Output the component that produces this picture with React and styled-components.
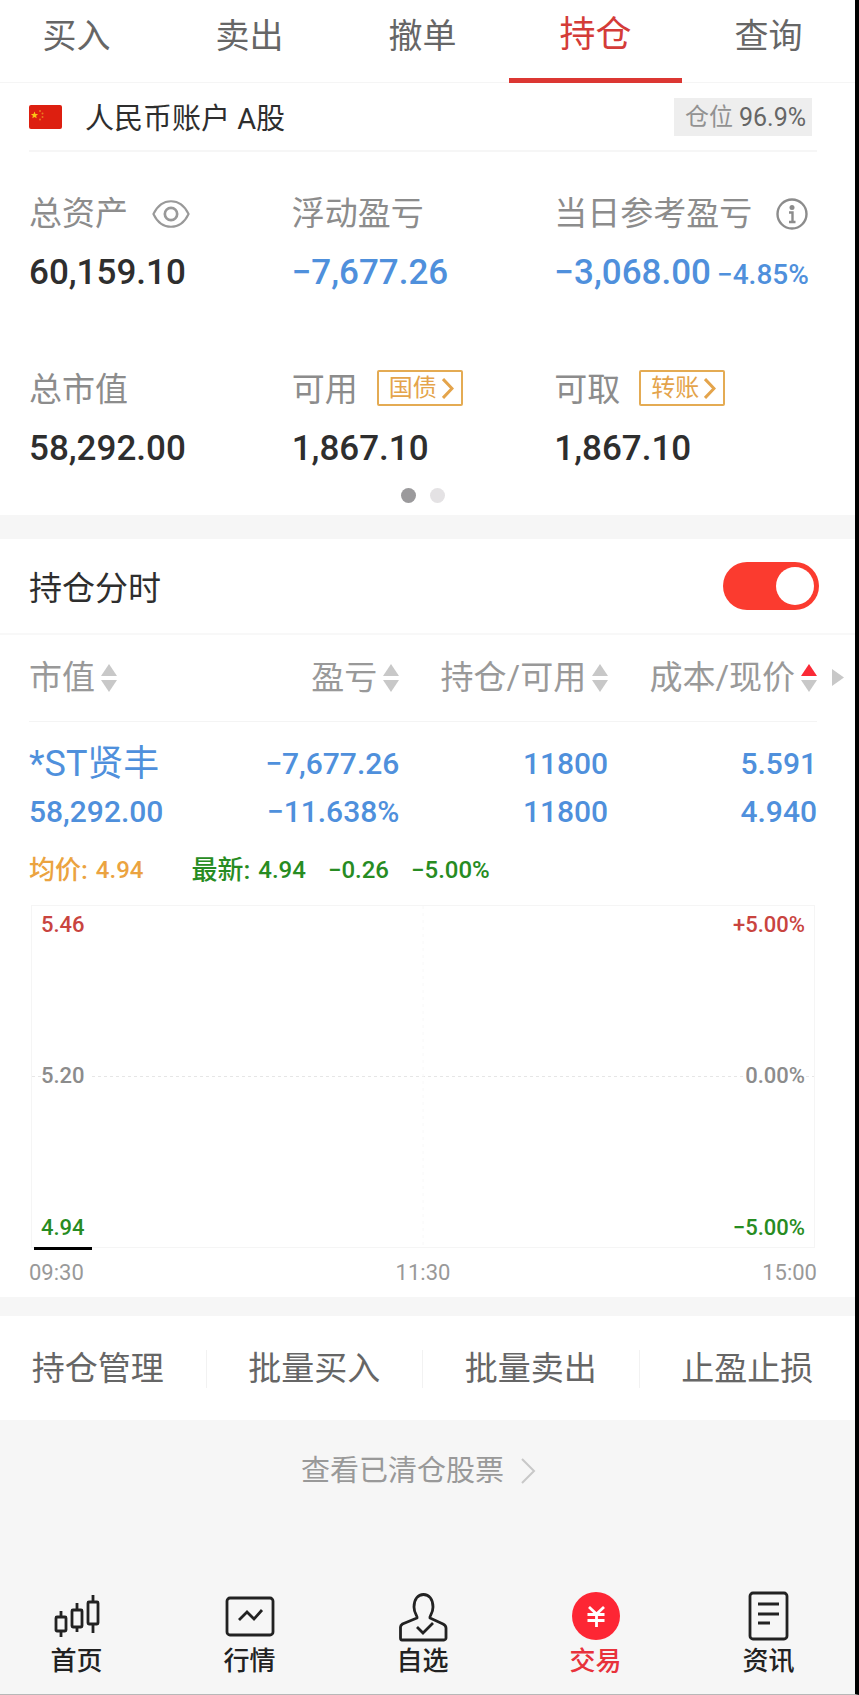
import React, { useState } from 'react'
import styled, { createGlobalStyle } from 'styled-components';

const GlobalStyle = createGlobalStyle`
    * {
        box-sizing: border-box;
    }
    body {
        margin: 0;
        background: #f6f6f6;
        font-family: Roboto, "Noto Sans CJK SC", sans-serif;
        line-height: 1.2;
        color: #2e2e2e;
    }
    button, a {
        font: inherit;
        color: inherit;
        text-decoration: none;
        background: none;
        border: 0;
        padding: 0;
        cursor: pointer;
    }
`;

const Screen = styled.div`
    display: flex;
    flex-direction: column;
    min-height: 100vh;
    overflow: hidden;
    border-right: 4px solid #000;
    border-bottom: 1px solid #b8b8b8;
`;

const Panel = styled.section`
    background: #fff;
    padding: 0 38px 0 29px;
    margin-bottom: ${({ gap }) => gap || 0}px;
`;

// верхние вкладки
const Tabs = styled.nav`
    display: flex;
    height: 83px;
    margin-left: -10px;
    background: #fff;
    border-bottom: 1px solid #f5f5f5;
`;

const Tab = styled.button`
    flex: 1;
    height: 83px;
    padding-bottom: ${({ $active }) => ($active ? 6 : 11)}px;
    border-bottom: ${({ $active }) => ($active ? '5px solid #dc3733' : '0')};
    font-size: ${({ $active }) => ($active ? 36 : 34)}px;
    color: ${({ $active }) => ($active ? '#d43c38' : '#666')};
`;

const AccountRow = styled.div`
    display: flex;
    align-items: center;
    height: 69px;
    border-bottom: 2px solid #f6f6f6;
`;

const AccountName = styled.h1`
    margin: 0 auto 0 23px;
    padding-top: 4px;
    font-size: 29px;
    font-weight: 400;
    line-height: 40px;
`;

const PositionRate = styled.div`
    display: flex;
    align-items: center;
    gap: 6px;
    height: 38px;
    margin-right: 5px;
    padding: 2px 6px 0 11px;
    background: #eee;
    font-size: 25px;
    color: #666;
`;

const RateLabel = styled.span`
    font-size: 24px;
    color: #929292;
`;

const Stats = styled.dl`
    display: grid;
    grid-template-columns: repeat(3, 1fr);
    row-gap: 67px;
    margin: 0;
    padding-top: 38px;
`;

const StatLabel = styled.dt`
    display: flex;
    align-items: center;
    height: 48px;
    margin-bottom: 11px;
    font-size: 33px;
    color: #8c8c8c;
    white-space: nowrap;
`;

const StatValue = styled.dd`
    margin: 0;
    font-size: 35px;
    font-weight: 500;
    line-height: 48px;
    white-space: nowrap;
    color: ${({ $blue }) => ($blue ? '#4f90dc' : '#2e2e2e')};
`;

const Percent = styled.span`
    margin-left: 6px;
    font-size: 28px;
`;

const IconButton = styled.button`
    display: flex;
    margin-left: 24px;
`;

const TagButton = styled.button`
    display: flex;
    align-items: center;
    gap: 5px;
    height: 36px;
    margin: 0 0 4px 19px;
    padding: 0 7px 0 10px;
    border: 2px solid #e4ab53;
    border-radius: 2px;
    font-size: 24px;
    color: #e4a44b;
`;

const Dots = styled.div`
    display: flex;
    justify-content: center;
    gap: 14px;
    padding: 15px 0 12px;
`;

const Dot = styled.span`
    width: 15px;
    height: 15px;
    border-radius: 50%;
    background: ${({ $active }) => ($active ? '#9b9a9c' : '#e4e2e4')};
`;

const SwitchRow = styled.label`
    display: flex;
    justify-content: space-between;
    align-items: center;
    height: 96px;
    margin: 0 -38px 0 -29px;
    padding: 0 36px 0 29px;
    border-bottom: 2px solid #f8f8f8;
    font-size: 33px;
    line-height: normal;
`;

const Switch = styled.input`
    appearance: none;
    width: 96px;
    height: 48px;
    margin: 0;
    padding: 5px;
    border-radius: 24px;
    background: ${({ checked }) => (checked ? '#fb3b2f' : '#ddd')};
    cursor: pointer;

    &::before {
        content: "";
        display: block;
        width: 38px;
        height: 38px;
        margin-left: ${({ checked }) => (checked ? 48 : 0)}px;
        border-radius: 50%;
        background: #fff;
    }
`;

const TableWrap = styled.div`
    position: relative;
`;

const ScrollHint = styled.svg`
    position: absolute;
    top: 34px;
    right: -27px;
`;

const Table = styled.table`
    width: 100%;
    table-layout: fixed;
    border-collapse: collapse;
`;

const HeadCell = styled.th`
    width: ${({ $width }) => ($width ? `${$width}%` : 'auto')};
    height: 86px;
    padding: 0;
    border-bottom: 1px solid #f4f4f4;
    font-size: 33px;
    font-weight: 400;
    color: #999;
    text-align: ${({ $left }) => ($left ? 'left' : 'right')};
    white-space: nowrap;
`;

const SortButton = styled.button`
    display: inline-flex;
    align-items: center;
    gap: 6px;
`;

const Cell = styled.td`
    padding: 18px 0 4px;
    font-size: 30px;
    font-weight: 500;
    line-height: 48px;
    color: #4f90dc;
    text-align: ${({ $left }) => ($left ? 'left' : 'right')};
    white-space: nowrap;
`;

const StockName = styled.div`
    font-size: 36px;
    font-weight: 400;
`;

const Quote = styled.div`
    display: flex;
    align-items: center;
    gap: 22px;
    height: 44px;
    margin: 9px 0 12px;
    font-size: 24px;
    font-weight: 500;
    color: #278c22;
`;

const QuoteItem = styled.span`
    display: flex;
    align-items: center;
    gap: 8px;
    color: ${({ $orange }) => ($orange ? '#eba340' : '#278c22')};
    margin-right: ${({ $orange }) => ($orange ? 26 : 0)}px;
`;

const QuoteLabel = styled.span`
    font-size: 26px;
`;

const Chart = styled.div`
    position: relative;
    display: flex;
    flex-direction: column;
    justify-content: space-between;
    height: 343px;
    margin: 0 2px;
    padding: 7px 9px;
    border: 1px solid #f5f5f5;
`;

const ChartGrid = styled.svg`
    position: absolute;
    inset: 0;
    width: 100%;
    height: 100%;
    overflow: visible;
`;

const ScaleRow = styled.div`
    position: relative;
    display: flex;
    justify-content: space-between;
    font-size: 22px;
    font-weight: 500;
    line-height: 24px;
    color: ${({ color }) => color};
`;

const ScaleText = styled.span`
    padding-right: ${({ $padded }) => ($padded ? 4 : 0)}px;
    background: #fff;
`;

const Times = styled.div`
    display: flex;
    justify-content: space-between;
    padding: 13px 0 12px;
    font-size: 22px;
    line-height: 24px;
    color: #999;
`;

const Actions = styled.div`
    display: flex;
    height: 104px;
    margin-left: -10px;
    padding: 34px 0 32px;
    background: #fff;
`;

const Action = styled.button`
    flex: 1;
    font-size: 33px;
    line-height: 38px;
    color: #666;
    white-space: nowrap;

    & + & {
        border-left: 1px solid #f2f2f2;
    }
`;

const ClearedLink = styled.a`
    display: flex;
    justify-content: center;
    align-items: center;
    gap: 17px;
    margin: 33px 0;
    padding-right: 18px;
    font-size: 29px;
    line-height: 36px;
    color: #999;
`;

const BottomNav = styled.nav`
    display: flex;
    margin: auto 0 0 -10px;
    padding-bottom: 15px;
`;

const NavItem = styled.a`
    flex: 1;
    display: flex;
    flex-direction: column;
    align-items: center;
    gap: 3px;
    font-size: 26px;
    font-weight: 500;
    line-height: 36px;
    color: ${({ $active }) => ($active ? '#e8323b' : '#222')};
`;

const Flag = () => (
    <svg width="33" height="24" viewBox="0 0 33 24">
        <rect width="33" height="24" rx="2" fill="#dd1f10" />
        <path d="M5.500 6.500l1 2.400 2.600.2-2 1.700.6 2.500-2.200-1.400-2.200 1.400.6-2.500-2-1.700 2.600-.2z" fill="#f9c515" />
        <g fill="#ea7a20">
            <circle cx="11" cy="6" r="1" />
            <circle cx="13.500" cy="8.500" r="1" />
            <circle cx="13.500" cy="12" r="1" />
            <circle cx="11" cy="14.500" r="1" />
        </g>
    </svg>
)

const Eye = () => (
    <svg width="38" height="30" viewBox="0 0 40 30" fill="none" stroke="#999" strokeWidth="2.200">
        <path d="M1.500 15C6 5.500 12.500 1.500 20 1.500S34 5.500 38.500 15C34 24.500 27.500 28.500 20 28.500S6 24.500 1.500 15z" />
        <circle cx="20" cy="15" r="6.500" strokeWidth="2.800" />
    </svg>
)

const Info = () => (
    <svg width="32" height="32" viewBox="0 0 32 32" fill="none" stroke="#8c8c8c" strokeWidth="2.400">
        <circle cx="16" cy="16" r="14.500" />
        <circle cx="16" cy="9.500" r="2.500" fill="#8c8c8c" stroke="none" />
        <path d="M13 14.500h3.500V24M13 24h6.500" />
    </svg>
)

const Chevron = ({ width = 12, height = 21, color, stroke = 3 }) => (
    <svg width={width} height={height} viewBox={`0 0 ${width} ${height}`} fill="none" stroke={color} strokeWidth={stroke}>
        <path d={`M1 1L${width - 2} ${height / 2}L1 ${height - 1}`} />
    </svg>
)

const SortArrows = ({ up }) => (
    <svg width="16" height="28" viewBox="0 0 16 28">
        <path d="M8 0l8 12H0z" fill={up ? '#fa2a36' : '#c8c8c8'} />
        <path d="M0 16h16l-8 12z" fill="#c8c8c8" />
    </svg>
)

const navIcons = {
    home: (
        <>
            <path d="M8 19v5M8 39v6M24 11v6M24 35v5M40 3v6M40 32v9" />
            <rect x="3" y="25" width="10" height="14" rx="1" />
            <rect x="19" y="18" width="10" height="17" rx="1" />
            <rect x="35" y="10" width="10" height="22" rx="1" />
        </>
    ),
    market: (
        <>
            <rect x="1" y="6" width="46" height="37" rx="3" />
            <path d="M13 28l8-8 7 7 8-9" />
        </>
    ),
    watch: (
        <>
            <path d="M18 26c1-2-3-4-3-11C15 7 19 2.500 24.500 2.500S34 7 34 15c0 7-4 9-3 11l13 6c2 1 3 2 3 4v10c0 1-1 2-2 2H3c-1 0-1.500-1-1.500-2V35c0-1 .5-2 2-3z" />
            <path d="M18 35l6 6 10-10" />
        </>
    ),
    trade: (
        <>
            <circle cx="24" cy="24" r="24" fill="#fd2634" stroke="none" />
            <path d="M17 15l7.500 7 7.500-7M15.500 22.500h17M15.500 28.500h17M24.500 22v13" stroke="#fff" />
        </>
    ),
    news: (
        <>
            <rect x="5" y="1" width="37" height="46" rx="3" />
            <path d="M13 12h21M13 22h21M13 31h12" />
        </>
    ),
};

const NavIcon = ({ name }) => (
    <svg width="48" height="48" viewBox="0 0 48 48" fill="none" stroke="#222" strokeWidth="2.800" overflow="visible">
        {navIcons[name]}
    </svg>
)

const tabs = ['买入', '卖出', '撤单', '持仓', '查询'];

const columns = [
    { title: '市值', width: 25 },
    { title: '盈亏', width: 22 },
    { title: '持仓/可用' },
    { title: '成本/现价', up: true },
];

const nav = [
    { title: '首页', icon: 'home' },
    { title: '行情', icon: 'market' },
    { title: '自选', icon: 'watch' },
    { title: '交易', icon: 'trade' },
    { title: '资讯', icon: 'news' },
];

export default function App() {
    const [tab, setTab] = useState('持仓')
    const [showChart, setShowChart] = useState(true)

    return (
        <>
            <GlobalStyle />
            <Screen>
                <Tabs>
                    {tabs.map((title) => (
                        <Tab key={title} $active={title === tab} onClick={() => setTab(title)}>{title}</Tab>
                    ))}
                </Tabs>

                <Panel gap={24}>
                    <AccountRow>
                        <Flag />
                        <AccountName>人民币账户 A股</AccountName>
                        <PositionRate><RateLabel>仓位</RateLabel>96.9%</PositionRate>
                    </AccountRow>

                    <Stats>
                        <div>
                            <StatLabel>总资产<IconButton aria-label="隐藏金额"><Eye /></IconButton></StatLabel>
                            <StatValue>60,159.10</StatValue>
                        </div>
                        <div>
                            <StatLabel>浮动盈亏</StatLabel>
                            <StatValue $blue>−7,677.26</StatValue>
                        </div>
                        <div>
                            <StatLabel>当日参考盈亏<IconButton aria-label="说明"><Info /></IconButton></StatLabel>
                            <StatValue $blue>−3,068.00<Percent>−4.85%</Percent></StatValue>
                        </div>
                        <div>
                            <StatLabel>总市值</StatLabel>
                            <StatValue>58,292.00</StatValue>
                        </div>
                        <div>
                            <StatLabel>可用<TagButton>国债<Chevron color="#e4a44b" /></TagButton></StatLabel>
                            <StatValue>1,867.10</StatValue>
                        </div>
                        <div>
                            <StatLabel>可取<TagButton>转账<Chevron color="#e4a44b" /></TagButton></StatLabel>
                            <StatValue>1,867.10</StatValue>
                        </div>
                    </Stats>

                    <Dots>
                        <Dot $active />
                        <Dot />
                    </Dots>
                </Panel>

                <Panel gap={19}>
                    <SwitchRow>
                        持仓分时
                        <Switch type="checkbox" checked={showChart} onChange={() => setShowChart(!showChart)} />
                    </SwitchRow>

                    <TableWrap>
                        <Table>
                            <thead>
                                <tr>
                                    {columns.map(({ title, width, up }, i) => (
                                        <HeadCell key={title} $width={width} $left={i === 0}>
                                            <SortButton>{title}<SortArrows up={up} /></SortButton>
                                        </HeadCell>
                                    ))}
                                </tr>
                            </thead>
                            <tbody>
                                <tr>
                                    <Cell $left><StockName>*ST贤丰</StockName>58,292.00</Cell>
                                    <Cell>−7,677.26<br />−11.638%</Cell>
                                    <Cell>11800<br />11800</Cell>
                                    <Cell>5.591<br />4.940</Cell>
                                </tr>
                            </tbody>
                        </Table>
                        <ScrollHint width="12" height="17" viewBox="0 0 12 17">
                            <path d="M0 0l12 8.500L0 17z" fill="#c8c8c8" />
                        </ScrollHint>
                    </TableWrap>

                    {showChart && (
                        <>
                            <Quote>
                                <QuoteItem $orange><QuoteLabel>均价:</QuoteLabel>4.94</QuoteItem>
                                <QuoteItem><QuoteLabel>最新:</QuoteLabel>4.94</QuoteItem>
                                <QuoteItem>−0.26</QuoteItem>
                                <QuoteItem>−5.00%</QuoteItem>
                            </Quote>
                            <Chart>
                                <ChartGrid>
                                    <line x1="0" y1="50%" x2="100%" y2="50%" stroke="#e6e6e6" strokeDasharray="3 3" />
                                    <line x1="50%" y1="0" x2="50%" y2="100%" stroke="#f8f8f8" strokeDasharray="3 4" />
                                    <rect x="2" y="100%" width="58" height="3" fill="#000" />
                                </ChartGrid>
                                <ScaleRow color="#c9443f"><ScaleText>5.46</ScaleText><ScaleText>+5.00%</ScaleText></ScaleRow>
                                <ScaleRow color="#8c8c8c"><ScaleText $padded>5.20</ScaleText><ScaleText>0.00%</ScaleText></ScaleRow>
                                <ScaleRow color="#278c22"><ScaleText>4.94</ScaleText><ScaleText>−5.00%</ScaleText></ScaleRow>
                            </Chart>
                        </>
                    )}
                    <Times>
                        <span>09:30</span>
                        <span>11:30</span>
                        <span>15:00</span>
                    </Times>
                </Panel>

                <Actions>
                    <Action>持仓管理</Action>
                    <Action>批量买入</Action>
                    <Action>批量卖出</Action>
                    <Action>止盈止损</Action>
                </Actions>

                <ClearedLink href="#cleared">
                    查看已清仓股票
                    <Chevron width={15} height={26} color="#c8c8c8" stroke={2} />
                </ClearedLink>

                <BottomNav>
                    {nav.map(({ title, icon }) => (
                        <NavItem key={title} href={`#${icon}`} $active={icon === 'trade'}>
                            <NavIcon name={icon} />
                            {title}
                        </NavItem>
                    ))}
                </BottomNav>
            </Screen>
        </>
    )
}
